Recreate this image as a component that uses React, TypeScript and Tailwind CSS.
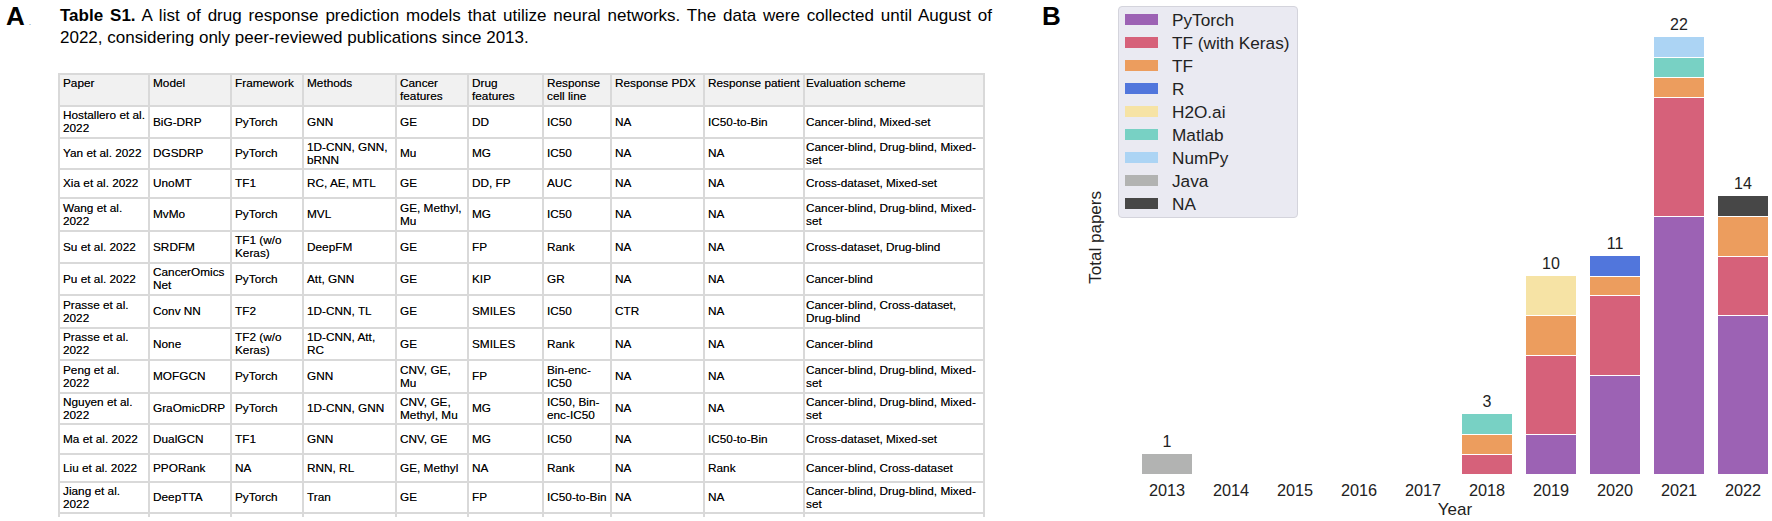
import React from "react";

type Row = { h: number; cells: string[] };

const COLS = [90, 82, 72, 93, 72, 75, 68, 93, 100, 180];

const HEADER: Row = {
  h: 32,
  cells: [
    "Paper",
    "Model",
    "Framework",
    "Methods",
    "Cancer\nfeatures",
    "Drug\nfeatures",
    "Response\ncell line",
    "Response PDX",
    "Response patient",
    "Evaluation scheme",
  ],
};

const ROWS: Row[] = [
  { h: 32, cells: ["Hostallero et al.\n2022", "BiG-DRP", "PyTorch", "GNN", "GE", "DD", "IC50", "NA", "IC50-to-Bin", "Cancer-blind, Mixed-set"] },
  { h: 31, cells: ["Yan et al. 2022", "DGSDRP", "PyTorch", "1D-CNN, GNN,\nbRNN", "Mu", "MG", "IC50", "NA", "NA", "Cancer-blind, Drug-blind, Mixed-\nset"] },
  { h: 29, cells: ["Xia et al. 2022", "UnoMT", "TF1", "RC, AE, MTL", "GE", "DD, FP", "AUC", "NA", "NA", "Cross-dataset, Mixed-set"] },
  { h: 33, cells: ["Wang et al.\n2022", "MvMo", "PyTorch", "MVL", "GE, Methyl,\nMu", "MG", "IC50", "NA", "NA", "Cancer-blind, Drug-blind, Mixed-\nset"] },
  { h: 32, cells: ["Su et al. 2022", "SRDFM", "TF1 (w/o\nKeras)", "DeepFM", "GE", "FP", "Rank", "NA", "NA", "Cross-dataset, Drug-blind"] },
  { h: 32, cells: ["Pu et al. 2022", "CancerOmics\nNet", "PyTorch", "Att, GNN", "GE", "KIP", "GR", "NA", "NA", "Cancer-blind"] },
  { h: 33, cells: ["Prasse et al.\n2022", "Conv NN", "TF2", "1D-CNN, TL", "GE", "SMILES", "IC50", "CTR", "NA", "Cancer-blind, Cross-dataset,\nDrug-blind"] },
  { h: 32, cells: ["Prasse et al.\n2022", "None", "TF2 (w/o\nKeras)", "1D-CNN, Att,\nRC", "GE", "SMILES", "Rank", "NA", "NA", "Cancer-blind"] },
  { h: 33, cells: ["Peng et al.\n2022", "MOFGCN", "PyTorch", "GNN", "CNV, GE,\nMu", "FP", "Bin-enc-\nIC50", "NA", "NA", "Cancer-blind, Drug-blind, Mixed-\nset"] },
  { h: 31, cells: ["Nguyen et al.\n2022", "GraOmicDRP", "PyTorch", "1D-CNN, GNN", "CNV, GE,\nMethyl, Mu", "MG", "IC50, Bin-\nenc-IC50", "NA", "NA", "Cancer-blind, Drug-blind, Mixed-\nset"] },
  { h: 30, cells: ["Ma et al. 2022", "DualGCN", "TF1", "GNN", "CNV, GE", "MG", "IC50", "NA", "IC50-to-Bin", "Cross-dataset, Mixed-set"] },
  { h: 28, cells: ["Liu et al. 2022", "PPORank", "NA", "RNN, RL", "GE, Methyl", "NA", "Rank", "NA", "Rank", "Cancer-blind, Cross-dataset"] },
  { h: 31, cells: ["Jiang et al.\n2022", "DeepTTA", "PyTorch", "Tran", "GE", "FP", "IC50-to-Bin", "NA", "NA", "Cancer-blind, Drug-blind, Mixed-\nset"] },
];

const FW = {
  pytorch: { name: "PyTorch", color: "#9c62b4" },
  tfk: { name: "TF (with Keras)", color: "#d6617a" },
  tf: { name: "TF", color: "#ec9d5e" },
  r: { name: "R", color: "#5176dc" },
  h2o: { name: "H2O.ai", color: "#f6e3a5" },
  matlab: { name: "Matlab", color: "#78d1c4" },
  numpy: { name: "NumPy", color: "#acd4f4" },
  java: { name: "Java", color: "#b2b3b2" },
  na: { name: "NA", color: "#474747" },
};

type FwKey = keyof typeof FW;

// stacks listed bottom to top
const YEARS: { year: string; stack: [FwKey, number][] }[] = [
  { year: "2013", stack: [["java", 1]] },
  { year: "2014", stack: [] },
  { year: "2015", stack: [] },
  { year: "2016", stack: [] },
  { year: "2017", stack: [] },
  { year: "2018", stack: [["tfk", 1], ["tf", 1], ["matlab", 1]] },
  { year: "2019", stack: [["pytorch", 2], ["tfk", 4], ["tf", 2], ["h2o", 2]] },
  { year: "2020", stack: [["pytorch", 5], ["tfk", 4], ["tf", 1], ["r", 1]] },
  { year: "2021", stack: [["pytorch", 13], ["tfk", 6], ["tf", 1], ["matlab", 1], ["numpy", 1]] },
  { year: "2022", stack: [["pytorch", 8], ["tfk", 3], ["tf", 2], ["na", 1]] },
];

const UNIT = 19.85;

const Cell = ({ text, w, last, header }: { text: string; w: number; last: boolean; header: boolean }) => (
  <div
    className={`shrink-0 h-full border-r-2 border-[#d9d9d9] flex whitespace-pre text-[11.8px] leading-[13px] ${
      header ? "items-start pt-[2px]" : "items-center"
    } ${last ? "pl-[1px]" : "pl-[3px]"}`}
    style={{ width: w }}
  >
    {text}
  </div>
);

const TableRow = ({ row, header }: { row: Row; header: boolean }) => (
  <div
    className={`flex border-b-2 border-[#d9d9d9] ${header ? "bg-[#f1f1f1]" : "bg-white"}`}
    style={{ height: row.h }}
  >
    {row.cells.map((c, i) => (
      <Cell key={i} text={c} w={COLS[i]} last={i === COLS.length - 1} header={header} />
    ))}
  </div>
);

const PanelA = () => (
  <div className="w-[1000px] shrink-0 flex">
    <div className="w-[58px] shrink-0 pl-[6px] flex items-start">
      <span className="text-[26px] leading-[32px] font-bold text-black">A</span>
      <span className="ml-[4px] mt-[18px] text-[9px] leading-[9px] text-[#9a9a9a]">.</span>
    </div>
    <div className="flex flex-col">
      <div className="mt-[5px] ml-[2px] text-[17px] leading-[22px] text-black">
        <div className="w-[932px] [text-align-last:justify]">
          <span className="font-bold">Table S1.</span> A list of drug response prediction models that utilize neural
          networks. The data were collected until August of
        </div>
        <div>2022, considering only peer-reviewed publications since 2013.</div>
      </div>
      <div className="mt-[24px] w-[927px] border-l-2 border-t-2 border-[#d9d9d9] text-black [text-shadow:0_0_0.4px_rgba(0,0,0,0.5)]">
        <TableRow row={HEADER} header />
        {ROWS.map((r, i) => (
          <TableRow key={i} row={r} header={false} />
        ))}
        <div className="flex h-[3px]">
          {COLS.map((w, i) => (
            <div key={i} className="shrink-0 h-full border-r-2 border-[#d9d9d9]" style={{ width: w }} />
          ))}
        </div>
      </div>
    </div>
  </div>
);

const Legend = () => (
  <div className="absolute top-[6px] left-[6px] w-[180px] h-[212px] bg-[#eaeaf2] border border-[#d4d4dc] rounded-[4px] pt-[1px] pl-[6px]">
    {(Object.keys(FW) as FwKey[]).map((k) => (
      <div key={k} className="flex items-center h-[23px]">
        <div className="w-[33px] h-[11px] shrink-0" style={{ backgroundColor: FW[k].color }} />
        <span className="ml-[14px] text-[17.2px] leading-[20px] text-[#222] whitespace-nowrap">{FW[k].name}</span>
      </div>
    ))}
  </div>
);

const PanelB = () => (
  <div className="flex shrink-0">
    <div className="w-[80px] shrink-0 pl-[42px]">
      <span className="text-[26px] leading-[32px] font-bold text-black">B</span>
    </div>
    <div className="w-[32px] h-[474px] shrink-0 flex items-center justify-center">
      <span className="[writing-mode:vertical-rl] rotate-180 text-[17px] leading-[20px] text-[#222] whitespace-nowrap">
        Total papers
      </span>
    </div>
    <div className="relative pl-[23px]">
      <Legend />
      <div className="flex h-[474px]">
        {YEARS.map((y) => {
          const total = y.stack.reduce((s, [, n]) => s + n, 0);
          return (
            <div key={y.year} className="w-[64px] shrink-0 flex flex-col items-center justify-end">
              {total > 0 && (
                <span className="text-[16px] leading-[18px] mb-[3px] text-[#222]">{total}</span>
              )}
              <div className="w-[50px] flex flex-col-reverse">
                {y.stack.map(([k, n], i) => (
                  <div
                    key={k}
                    className={i < y.stack.length - 1 ? "border-t-[1.5px] border-white" : ""}
                    style={{ height: n * UNIT, backgroundColor: FW[k].color }}
                  />
                ))}
              </div>
            </div>
          );
        })}
      </div>
      <div className="flex mt-[6px]">
        {YEARS.map((y) => (
          <div key={y.year} className="w-[64px] shrink-0 text-center text-[16.3px] leading-[20px] text-[#222]">
            {y.year}
          </div>
        ))}
      </div>
      <div className="w-[640px] text-center text-[17px] leading-[20px] text-[#222]">Year</div>
    </div>
  </div>
);

export default function App() {
  return (
    <div className="w-[1772px] h-[521px] bg-white flex overflow-hidden font-['Liberation_Sans',Arial,sans-serif]">
      <PanelA />
      <PanelB />
    </div>
  );
}
